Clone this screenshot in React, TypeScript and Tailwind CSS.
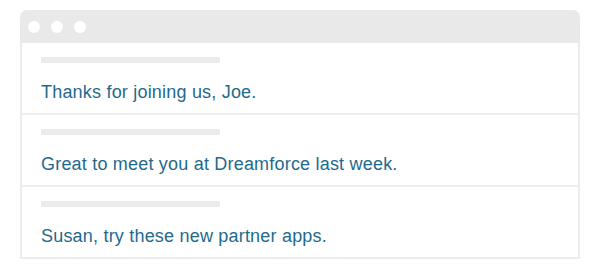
const messages = [
  'Thanks for joining us, Joe.',
  'Great to meet you at Dreamforce last week.',
  'Susan, try these new partner apps.',
]

export default function App() {
  return (
    <div className="w-[600px] h-[273px] bg-white pt-[10px] pl-[20px] font-['Liberation_Sans',Arial,sans-serif]">
      <div className="w-[560px]">
        {/* Title bar */}
        <div className="h-[33px] rounded-t-[7px] bg-[#e9e9e9] flex items-center gap-[11px] pl-[8px]">
          <span className="w-[12px] h-[12px] rounded-full bg-white" />
          <span className="w-[12px] h-[12px] rounded-full bg-white" />
          <span className="w-[12px] h-[12px] rounded-full bg-white" />
        </div>

        {/* Messages */}
        <div className="border-x-2 border-b-2 border-[#ececec]">
          {messages.map((msg, i) => (
            <div
              key={i}
              className={`pl-[19px] pt-[14px] pb-[9px] ${i < messages.length - 1 ? 'border-b-2 border-[#ededed]' : ''}`}
            >
              <div className="w-[179px] h-[6px] bg-[#ebebeb]" />
              <p className="mt-[17px] text-[18px] leading-[24px] tracking-[0.2px] text-[#1f6a8c]">{msg}</p>
            </div>
          ))}
        </div>
      </div>
    </div>
  )
}
